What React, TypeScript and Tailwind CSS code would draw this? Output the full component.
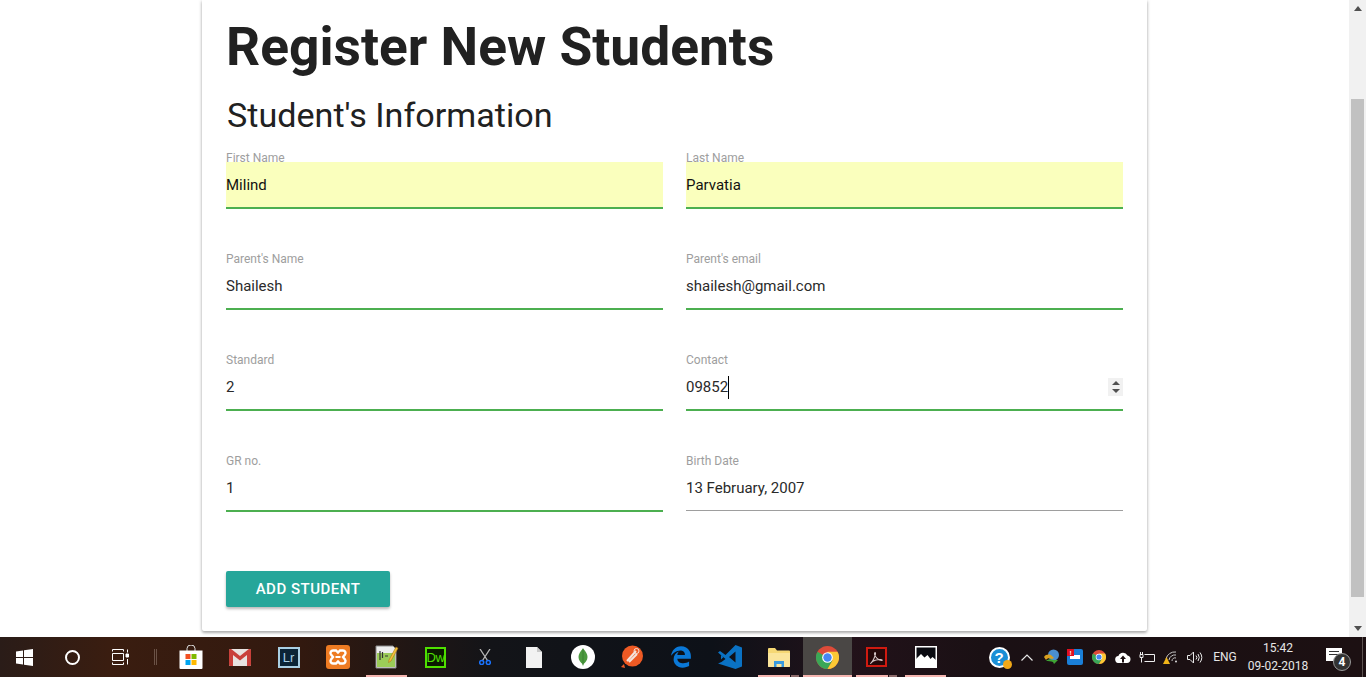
import type { ReactNode } from 'react'
import { FaEdgeLegacy } from 'react-icons/fa6'

const ROBOTO = 'font-[Roboto,sans-serif]'

function Field({ label, value, caret, spinner, idle, filled }: {
  label: string
  value: string
  caret?: boolean
  spinner?: boolean
  idle?: boolean
  filled?: boolean
}) {
  return (
    <div>
      <label className="relative z-10 block h-[10px] text-xs leading-[12px] text-[#9e9e9e]">{label}</label>
      <div
        className={`flex items-center justify-between pt-[2px] text-[15px] ${filled ? 'bg-[#faffbd] text-[#111]' : 'text-[#2a2a2a]'} ${idle ? 'h-[46px] border-b border-[#9e9e9e]' : 'h-[47px] border-b-2 border-[#4caf50]'}`}
      >
        <span className={caret ? 'border-r border-black' : ''}>{value}</span>
        {spinner && (
          <span className="-mt-[2px] flex h-[18px] w-[15px] flex-col items-center justify-center gap-[4px] bg-[#f1f1f1]">
            <span className="h-0 w-0 border-x-[4px] border-b-[4px] border-x-transparent border-b-[#505050]" />
            <span className="h-0 w-0 border-x-[4px] border-t-[4px] border-x-transparent border-t-[#505050]" />
          </span>
        )}
      </div>
    </div>
  )
}

function Scrollbar() {
  return (
    <div className="flex w-[17px] flex-col items-center bg-[#f1f1f1]">
      <div className="flex h-[17px] items-center justify-center">
        <span className="h-0 w-0 border-x-[4px] border-b-[5px] border-x-transparent border-b-[#505050]" />
      </div>
      <div className="mt-[82px] h-[498px] w-[13px] bg-[#c1c1c1]" />
      <div className="flex flex-1 items-end justify-center pb-[6px]">
        <span className="h-0 w-0 border-x-[4px] border-t-[5px] border-x-transparent border-t-[#505050]" />
      </div>
    </div>
  )
}

// taskbar slot, the pink strip is the "app is open" marker
function Slot({ children, open, active, stacked, w = 'w-[49px]' }: { children: ReactNode; open?: boolean; active?: boolean; stacked?: boolean; w?: string }) {
  return (
    <div className={`relative flex h-10 items-center justify-center ${w} ${active ? 'bg-[#4a4745]' : ''}`}>
      {children}
      {open && <span className={`absolute bottom-0 h-[2px] bg-[#f5b5b0] ${active ? 'inset-x-0' : stacked ? 'left-[4px] right-[13px]' : 'inset-x-[4px]'}`} />}
      {stacked && <span className="absolute bottom-0 right-[4px] h-[2px] w-[8px] bg-[#8e6c6c]" />}
    </div>
  )
}

function ChromeIcon({ size }: { size: number }) {
  return (
    <svg width={size} height={size} viewBox="0 0 24 24">
      <circle cx="12" cy="12" r="12" fill="#dd4b39" />
      <path d="M12 12 1.6 6A12 12 0 0 0 12 24l5.2-9z" fill="#3aa757" />
      <path d="M12 6h10.4A12 12 0 0 1 12 24l5.2-9z" fill="#fcc934" />
      <circle cx="12" cy="12" r="5.6" fill="#fff" />
      <circle cx="12" cy="12" r="4.4" fill="#4587f3" />
    </svg>
  )
}

function TaskIcons() {
  return (
    <>
      <Slot w="w-12">
        <svg width="17" height="17" viewBox="0 0 17 17" fill="#fff">
          <path d="M0 2.400 7 1.400V8H0zM8 1.300 17 0V8H8zM0 9h7v6.600L0 14.600zM8 9h9v8L8 15.700z" />
        </svg>
      </Slot>
      <Slot w="w-12">
        <span className="block h-[15px] w-[15px] rounded-full border-2 border-white" />
      </Slot>
      <Slot w="w-12">
        <svg width="17" height="16" viewBox="0 0 17 16" fill="none" stroke="#fff">
          <path d="M.5 .5h11M.5 15.500h11M.5 4.500h11v7H.5z" />
          <path d="M.5 .5v2M11.500 .5v2M.5 13.500v2M11.500 13.500v2M15.500 .5v3M15.500 10v5.500" />
          <path d="M14 5h2.500v3H14z" fill="#fff" />
        </svg>
      </Slot>
      <div className="flex h-10 w-[22px] items-center justify-center gap-[1px]">
        <span className="h-[16px] w-px bg-[#6b5246]" />
        <span className="h-[16px] w-px bg-[#6b5246]" />
      </div>
      <Slot>
        <svg width="24" height="24" viewBox="0 0 24 24">
          <path d="M8 6V3.500a4 3.500 0 0 1 8 0V6" fill="none" stroke="#ddd" strokeWidth="1" />
          <path d="M.5 5.500h23V23a1 1 0 0 1-1 1H1.500a1 1 0 0 1-1-1z" fill="#fff" />
          <rect x="6.500" y="9" width="5" height="5" fill="#f25022" />
          <rect x="12.500" y="9" width="5" height="5" fill="#7fba00" />
          <rect x="6.500" y="15" width="5" height="5" fill="#00a4ef" />
          <rect x="12.500" y="15" width="5" height="5" fill="#ffb900" />
        </svg>
      </Slot>
      <Slot>
        <svg width="22" height="17" viewBox="0 0 22 17">
          <rect width="22" height="17" rx="1.500" fill="#e8e3e0" />
          <path d="M0 1.500A1.500 1.500 0 0 1 2.500.3L11 7 19.500.3A1.500 1.500 0 0 1 22 1.500V15.500A1.500 1.500 0 0 1 20.500 17H18V6l-7 5.500L4 6v11H1.500A1.500 1.500 0 0 1 0 15.500z" fill="#c9403a" />
        </svg>
      </Slot>
      <Slot>
        <div className="flex h-[21px] w-[22px] items-center justify-center border-2 border-[#a9cfe3] bg-[#0b2436] font-['Liberation_Sans',sans-serif] text-[13px] leading-none text-[#a9cfe3]">Lr</div>
      </Slot>
      <Slot>
        <svg width="24" height="24" viewBox="0 0 24 24">
          <rect width="24" height="24" rx="3" fill="#ee7b22" />
          <path d="M7 5.500h3l2 2 2-2h3a2.500 2.500 0 0 1 2 4l-2 2.500 2 2.500a2.500 2.500 0 0 1-2 4h-3l-2-2-2 2H7a2.500 2.500 0 0 1-2-4l2-2.500-2-2.500a2.500 2.500 0 0 1 2-4z" fill="none" stroke="#fff" strokeWidth="2.400" />
          <path d="M9.500 12h5" stroke="#fff" strokeWidth="2" />
        </svg>
      </Slot>
      <Slot open>
        <svg width="24" height="24" viewBox="0 0 24 24">
          <path d="M1 1h17l3 3v19H1z" fill="#eee" stroke="#8a8a8a" />
          <path d="M2 8h18v14H2z" fill="#9ccc58" />
          <path d="M5 6v9M7.500 7v6M10 11h3" stroke="#333" strokeWidth="1.200" />
          <path d="M14 15 21 2l2 1.200L16 16l-2.500 1.500z" fill="#f3c13a" stroke="#a9761a" strokeWidth=".6" />
        </svg>
      </Slot>
      <Slot>
        <div className="flex h-[21px] w-[21px] items-center justify-center border-2 border-[#4fe000] bg-[#0a1a00] font-['Liberation_Sans',sans-serif] text-[13px] leading-none tracking-[-0.5px] text-[#4fe000]">Dw</div>
      </Slot>
      <Slot>
        <svg width="12" height="16" viewBox="0 0 12 16" fill="none">
          <path d="M1 0 8.500 11.500M11 0 3.500 11.500" stroke="#b8b8b8" strokeWidth="1.300" />
          <circle cx="2.700" cy="13.500" r="2" stroke="#1a73ff" strokeWidth="1.500" />
          <circle cx="9.300" cy="13.500" r="2" stroke="#1a73ff" strokeWidth="1.500" />
        </svg>
      </Slot>
      <Slot>
        <svg width="16" height="21" viewBox="0 0 16 21">
          <path d="M0 0h11l5 5v16H0z" fill="#f2f2f2" />
          <path d="M11 0v5h5z" fill="#c9c9c9" />
        </svg>
      </Slot>
      <Slot>
        <svg width="24" height="24" viewBox="0 0 24 24">
          <circle cx="12" cy="12" r="12" fill="#fff" />
          <path d="M12 3.500c3 3 4.500 6 4.500 8.500 0 3-2 5.500-4 7l-.5 2.500-.5-2.500c-2-1.500-4-4-4-7 0-2.500 1.500-5.500 4.500-8.500z" fill="#4c9a3f" />
          <path d="M12 3.500V20" stroke="#2f7329" strokeWidth=".6" />
        </svg>
      </Slot>
      <Slot>
        <svg width="22" height="24" viewBox="0 0 22 24">
          <circle cx="11.500" cy="11" r="10.500" fill="#ee5a24" />
          <path d="M6 16 15 6M8 17l8-8" stroke="#f4e4dc" strokeWidth="2" />
          <circle cx="15.500" cy="6" r="2.500" fill="none" stroke="#f4e4dc" />
          <path d="M0 22l3-3 1 4z" fill="#ee5a24" />
        </svg>
      </Slot>
      <Slot>
        <FaEdgeLegacy size={22} color="#0a78d7" />
      </Slot>
      <Slot>
        <svg width="24" height="24" viewBox="0 0 24 24">
          <path d="M17.500 0 24 2.500v19L17.500 24 0 18.500l3.500-1.500 4-3L0 7.500l2-1.500 5.500 4zM17.500 6.500 11 12l6.500 5.500z" fill="#0a72c4" />
          <path d="M3 10v4.500L5.500 12z" fill="#0a72c4" />
        </svg>
      </Slot>
      <Slot open stacked>
        <svg width="22" height="19" viewBox="0 0 22 19">
          <path d="M0 1a1 1 0 0 1 1-1h6l2 2.500h12a1 1 0 0 1 1 1V18a1 1 0 0 1-1 1H1a1 1 0 0 1-1-1z" fill="#f6d874" />
          <path d="M0 5h22v13a1 1 0 0 1-1 1H1a1 1 0 0 1-1-1z" fill="#fbe59b" />
          <path d="M6 19v-6h10v6h-2.500v-3h-5v3z" fill="#3a9be0" />
        </svg>
      </Slot>
      <Slot open active>
        <ChromeIcon size={23} />
      </Slot>
      <Slot open stacked>
        <div className="flex h-[20px] w-[21px] items-center justify-center border-2 border-[#d01a10] bg-[#26090a]">
          <svg width="13" height="13" viewBox="0 0 13 13" fill="none" stroke="#d8c8c8" strokeWidth="1.100">
            <path d="M1 12c1.500-1 4-6 4.500-9 .2-2-1-2-1 0 .3 3 4 6.500 7.500 6.500.8-.8-2-1.500-6-.5S1.500 11 1 12z" />
          </svg>
        </div>
      </Slot>
      <Slot open>
        <svg width="22" height="22" viewBox="0 0 22 22">
          <rect x=".75" y=".75" width="20.500" height="20.500" fill="#0a0a10" stroke="#fff" strokeWidth="1.500" />
          <path d="M1 21V13l5-5 3.500 3.500 3-2.500 3 4 2-2L21 14v7z" fill="#fff" />
        </svg>
      </Slot>
    </>
  )
}

function Tray() {
  return (
    <>
      <Slot w="w-[28px]">
        <div className="relative flex h-[21px] w-[21px] items-center justify-center rounded-full border-2 border-white bg-[#1b8fd6] font-['Liberation_Sans',sans-serif] text-[15px] font-bold leading-none text-white">
          ?
          <span className="absolute -right-[4px] bottom-[-3px] h-[9px] w-[9px] rounded-full bg-[#f0a818]" />
        </div>
      </Slot>
      <Slot w="w-[28px]">
        <svg width="12" height="7" viewBox="0 0 12 7" fill="none" stroke="#e8e8e8" strokeWidth="1.200">
          <path d="M.5 6.500 6 1l5.500 5.500" />
        </svg>
      </Slot>
      <Slot w="w-[22px]">
        <svg width="16" height="16" viewBox="0 0 16 16">
          <circle cx="9.500" cy="6" r="5.500" fill="#4a8fd0" />
          <path d="M0 8c2-3 6-3 8-1l2 2-2 1c-2-1-5-1-6 1z" fill="#d8a020" />
          <path d="M2 12c2-2 5-2 7-1h5l-4 4-1-2c-2-1-5-1-7-1z" fill="#3fa535" />
        </svg>
      </Slot>
      <Slot w="w-6">
        <div className="relative h-[16px] w-[16px] rounded-[2px] bg-[#1a7fd8]">
          <span className="absolute inset-x-[3px] top-[6px] h-[4px] bg-white" />
          <span className="absolute left-0 top-0 flex h-[7px] w-[7px] items-center justify-center bg-[#e01020] text-[6px] font-bold leading-none text-white">!</span>
        </div>
      </Slot>
      <Slot w="w-6">
        <ChromeIcon size={14} />
      </Slot>
      <Slot w="w-6">
        <svg width="16" height="11" viewBox="0 0 16 11">
          <path d="M4 11a3.500 3.500 0 0 1-.6-7A5 5 0 0 1 12.500 3.500 3.800 3.800 0 0 1 12 11z" fill="#fff" />
          <path d="M8 3.500 5 7h2v3.500h2V7h2z" fill="#1d1012" />
        </svg>
      </Slot>
      <Slot w="w-6">
        <svg width="16" height="11" viewBox="0 0 16 11" fill="none" stroke="#eee">
          <path d="M5.500 2.500h10v7h-10" />
          <path d="M1 2.500h3v3H1zM2.500 5.500v5M1.500 2.500V0M3.500 2.500V0" />
        </svg>
      </Slot>
      <Slot w="w-6">
        <svg width="16" height="14" viewBox="0 0 16 14" fill="none">
          <path d="M3 9a9 9 0 0 1 10-7M6 10a6 6 0 0 1 7-5M9 11a3 3 0 0 1 4-3" stroke="#c8c8c8" />
          <circle cx="13" cy="11.500" r="1" fill="#ddd" />
          <path d="M3.500 7 7 14H0z" fill="#f0b418" />
        </svg>
      </Slot>
      <Slot w="w-6">
        <svg width="16" height="13" viewBox="0 0 16 13" fill="none" stroke="#e8e8e8">
          <path d="M.5 4.500h2.500L6.500 1v11L3 8.500H.5z" />
          <path d="M9 4.500a3 3 0 0 1 0 4M11 3a6 6 0 0 1 0 7M13 1.500a8.500 8.500 0 0 1 0 10" />
        </svg>
      </Slot>
      <div className={`w-[36px] text-center text-xs text-[#e6e6e6] ${ROBOTO}`}>ENG</div>
      <div className={`w-[70px] text-center text-xs leading-[18px] text-[#e6e6e6] ${ROBOTO}`}>
        <div>15:42</div>
        <div>09-02-2018</div>
      </div>
      <Slot w="w-[44px]">
        <div className="relative h-[13px] w-[16px] -translate-x-px -translate-y-[3px] bg-white">
          <span className="absolute inset-x-[3px] top-[3px] h-px bg-[#333]" />
          <span className="absolute inset-x-[3px] top-[6px] h-px bg-[#333]" />
          <span className="absolute -right-[9px] -bottom-[10px] flex h-[18px] w-[18px] items-center justify-center rounded-full border border-[#999] bg-[#333] text-[12px] font-bold leading-none text-white">4</span>
        </div>
      </Slot>
      <span className="ml-[5px] h-10 w-px bg-[#5c5250]" />
    </>
  )
}

export default function App() {
  return (
    <div className={`flex h-[677px] w-[1366px] flex-col overflow-hidden bg-white ${ROBOTO}`}>
      <div className="flex h-[637px]">
        <main className="flex-1">
          <section className="ml-[202px] h-[631px] w-[945px] rounded-b-[2px] bg-white px-[24px] shadow-[0_2px_3px_rgba(0,0,0,0.28),0_0_4px_rgba(0,0,0,0.14)]">
            <h1 className="pt-[16px] text-[53.33px] font-bold leading-[62px] text-[#212121]">Register New Students</h1>
            <h2 className="mt-[15px] pl-px text-[34.13px] leading-[45px] text-[#212121]">Student's Information</h2>
            <form className="mt-[14px] grid grid-cols-2 gap-x-[23px] gap-y-[44px]">
              <Field label="First Name" value="Milind" filled />
              <Field label="Last Name" value="Parvatia" filled />
              <Field label="Parent's Name" value="Shailesh" />
              <Field label="Parent's email" value="shailesh@gmail.com" />
              <Field label="Standard" value="2" />
              <Field label="Contact" value="09852" caret spinner />
              <Field label="GR no." value="1" />
              <Field label="Birth Date" value="13 February, 2007" idle />
            </form>
            <button
              type="button"
              className="mt-[60px] h-[36px] w-[164px] -translate-y-px rounded-[2px] bg-[#26a69a] text-[15px] font-medium tracking-[0.5px] text-white shadow-[0_2px_3px_rgba(0,0,0,0.28)]"
            >
              ADD STUDENT
            </button>
          </section>
        </main>
        <Scrollbar />
      </div>
      <footer className="flex h-10 items-center bg-[linear-gradient(90deg,#2a1c18_0%,#3a1d10_8%,#32190f_22%,#131418_36%,#0d1118_52%,#22121a_62%,#1a1014_72%,#1c1012_100%)]">
        <TaskIcons />
        <div className="ml-[35px] flex items-center">
          <Tray />
        </div>
      </footer>
    </div>
  )
}
